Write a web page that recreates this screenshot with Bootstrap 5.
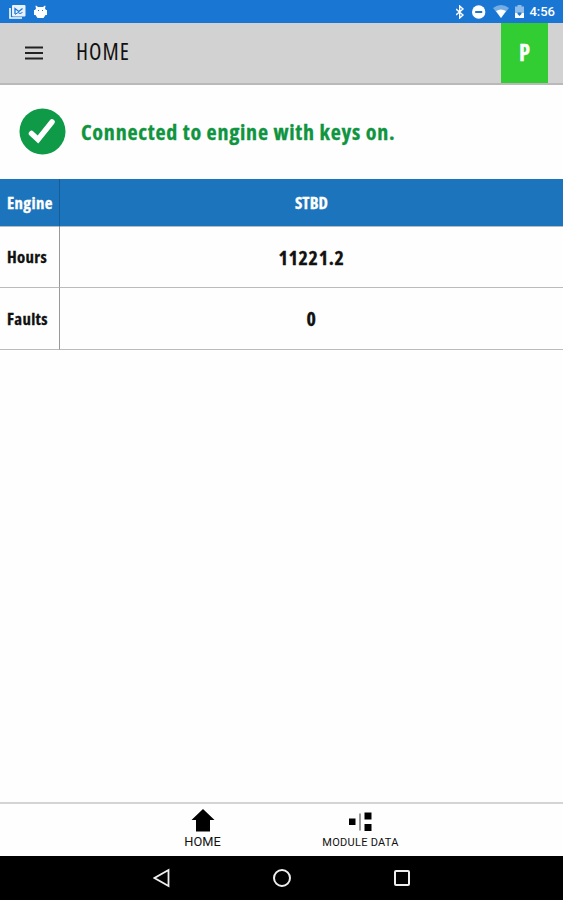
<!DOCTYPE html>
<html lang="en">
<head>
<meta charset="utf-8">
<meta name="viewport" content="width=device-width, initial-scale=1">
<title>Home</title>
<link href="https://cdn.jsdelivr.net/npm/bootstrap@5.3.0/dist/css/bootstrap.min.css" rel="stylesheet">
<style>
body{font-family:"Open Sans","Noto Sans",sans-serif;font-stretch:75%;background:#fefefe;color:#111;height:900px;overflow:hidden}
svg{display:block;flex:none}
.status{height:23px;background:#1976d2;padding:0 8px 0 9px}
.indicators{gap:6px}
.clock{font:500 13px/23px Roboto,sans-serif;margin-left:-1px}
.topbar{height:62px;background:#d2d2d2;border-bottom:2px solid #b9b9b9;padding-left:25px}
.title{font-size:22.8px;margin-left:33px;letter-spacing:1px;padding-bottom:1px}
.gear{width:47px;margin-right:15px;background:#32cd32;font-size:22.5px}
.notice{height:94px;padding:0 0 2px 19px;color:#0f9440;font-size:22px;letter-spacing:.75px}
.notice-text{margin-left:15px}
.notice-text,.engine,.gear{-webkit-text-stroke:.3px currentColor}
.engine{grid-template-columns:60px 1fr;grid-template-rows:48px 61px 62px}
.engine>div{border-bottom:1px solid #bbb;display:flex;align-items:center}
.engine>.k{border-right:1px solid #999;padding-left:7px;font-size:16.8px;letter-spacing:.35px}
.engine>.v{justify-content:center;font-size:20px;letter-spacing:.65px;padding-top:1px}
.engine>.h{background:#1c75bc;color:#fff;font-size:16.8px;letter-spacing:.1px;padding-top:1px;-webkit-text-stroke-color:#fff}
.engine>.k.h{border-right-color:#165c96;letter-spacing:.4px}
.tabs{height:54px;border-top:2px solid #d4d4d4;font-family:Roboto,sans-serif;font-stretch:100%}
.tab{width:158px;padding-top:5px;line-height:13px;font-size:12.8px}
.tab-label{margin-top:3px}
.tab-sm{font-size:11px;letter-spacing:.28px}
.tab-sm .tab-label{margin-top:4px}
.sys{height:44px;background:#000;gap:101px}
</style>
</head>
<body class="d-flex flex-column">
<div class="status d-flex align-items-center text-white">
  <svg width="17" height="16" viewBox="0 0 17 16"><path d="M1 4v10h12" fill="none" stroke="#fff" stroke-width="1.6"/><rect x="3" y="1" width="13.500" height="11.500" rx="1" fill="#e8f2ff"/><path d="M6 10V4.500l3.800 3L13.500 4.500" fill="none" stroke="#1976d2" stroke-width="1.300"/><path d="M6 10.500l3-2 2 1 2.500-1" fill="none" stroke="#1976d2"/></svg>
  <svg class="ms-2" width="13" height="14" viewBox="0 0 13 14"><path d="M2 .5l2 1.500h5l2-1.500.5.5-.5 2.500 1 1.500h1v5H11.500L9.500 13h-6L1.500 10H0V5h1L2 3.500 1.500 1z" fill="#fff"/><path d="M4 5.500h1M8 5.500h1" stroke="#1976d2"/></svg>
  <div class="indicators d-flex align-items-center ms-auto">
    <svg width="10" height="14" viewBox="0 0 10 14"><path d="M0 4l7 6L3.700 13V1L7 4 0 10" fill="none" stroke="#fff" stroke-width="1.400"/></svg>
    <svg width="15" height="14" viewBox="0 0 15 14"><circle cx="6.700" cy="7" r="6.700" fill="#fff"/><path d="M3.200 7h7" stroke="#1976d2" stroke-width="2"/></svg>
    <svg width="16" height="13" viewBox="0 0 16 13"><path d="M0 3Q8-3 16 3L8 13z" fill="#74ade5"/><path d="M3 6Q8 3 13 6L8 13z" fill="#fff"/></svg>
    <svg width="9" height="13" viewBox="0 0 9 13"><path d="M0 1.500h2.500V0h4v1.500H9V13H0z" fill="#8dbceb"/><path d="M0 8h9v5H0z" fill="#fff"/><path d="M2.500 7.500h4v1.500l-2 2-2-2z" fill="#1976d2"/></svg>
    <span class="clock">4:56</span>
  </div>
</div>
<header class="topbar d-flex align-items-center">
  <svg width="18" height="14" viewBox="0 0 18 14"><path d="M0 1.500h18M0 7h18M0 12.500h18" stroke="#222" stroke-width="1.900"/></svg>
  <span class="title">HOME</span>
  <div class="gear ms-auto align-self-stretch d-flex align-items-center justify-content-center text-white fw-bold">P</div>
</header>
<div class="notice d-flex align-items-center fw-bold">
  <svg width="47" height="47" viewBox="0 0 47 47"><circle cx="23.500" cy="23.500" r="23" fill="#0f9a48"/><path d="M12.500 25.500l6.500 6L33 14" fill="none" stroke="#fff" stroke-width="5.500" stroke-linecap="round"/></svg>
  <span class="notice-text">Connected to engine with keys on.</span>
</div>
<div class="engine d-grid fw-bold">
  <div class="k h">Engine</div><div class="v h">STBD</div>
  <div class="k">Hours</div><div class="v">11221.2</div>
  <div class="k">Faults</div><div class="v">0</div>
</div>
<nav class="tabs mt-auto d-flex justify-content-center">
  <div class="tab d-flex flex-column align-items-center">
    <svg width="24" height="23" viewBox="0 0 24 23"><path d="M12 0l11.500 11H19v11.500H5V11H.5z" fill="#000"/></svg><span class="tab-label">HOME</span>
  </div>
  <div class="tab tab-sm d-flex flex-column align-items-center">
    <svg width="24" height="23" viewBox="0 0 24 23"><path d="M0 9.500H6.500v6.500H0zM15.500 3.500H22.500v7H15.500zM15.500 15H22.500v7H15.500z" fill="#000"/><path d="M11 4.500v17" stroke="#777" stroke-width="1.500"/></svg><span class="tab-label">MODULE DATA</span>
  </div>
</nav>
<div class="sys d-flex align-items-center justify-content-center">
  <svg width="18" height="20" viewBox="0 0 18 20"><path d="M15.500 2v16L1.500 10z" fill="none" stroke="#eee" stroke-width="1.800"/></svg>
  <svg width="20" height="20" viewBox="0 0 20 20"><circle cx="10" cy="10" r="8" fill="none" stroke="#eee" stroke-width="2"/></svg>
  <svg width="18" height="18" viewBox="0 0 18 18"><rect x="2" y="2" width="14" height="14" rx="1" fill="none" stroke="#eee" stroke-width="2"/></svg>
</div>
<script src="https://cdn.jsdelivr.net/npm/bootstrap@5.3.0/dist/js/bootstrap.bundle.min.js"></script>
</body>
</html>
